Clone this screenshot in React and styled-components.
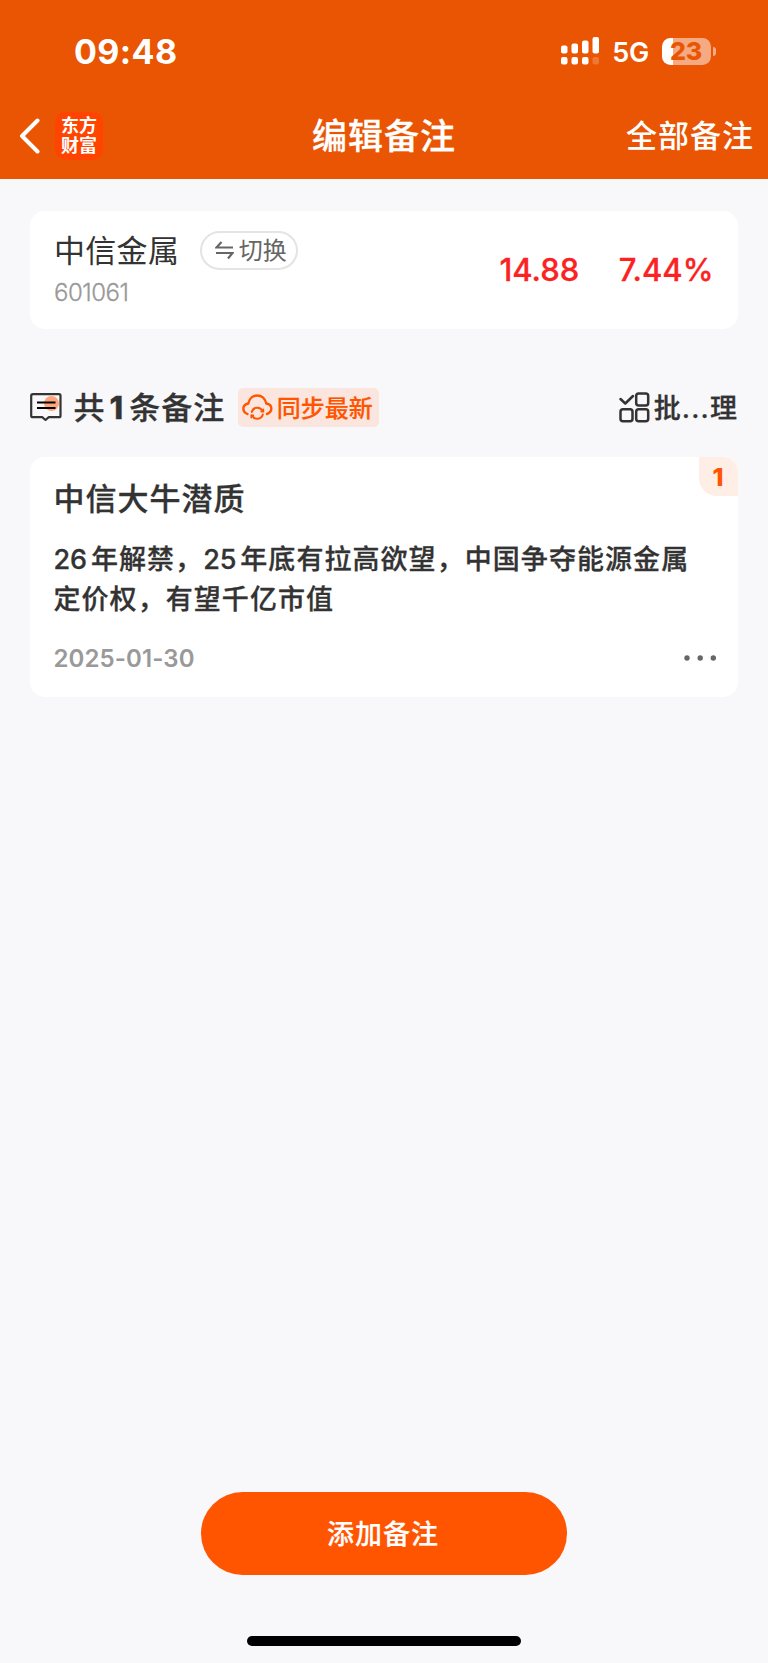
import React from 'react'
import styled, { createGlobalStyle } from 'styled-components';

const GlobalStyle = createGlobalStyle`
    body {
        margin: 0;
        background: #f8f8fb;
        font-family: Inter, 'Noto Sans CJK SC', sans-serif;
        color: #333;
    }
    * {
        box-sizing: border-box;
    }
    h1, h2, h3, p {
        margin: 0;
        font-weight: 500;
    }
    button {
        border: none;
        padding: 0;
        background: none;
        color: inherit;
        font-family: inherit;
    }
    svg {
        display: block;
        flex: none;
    }
`

const StyledPage = styled.div`
    width: 768px;
    height: 1663px;
    display: flex;
    flex-direction: column;
    white-space: nowrap;
`

const StyledHeader = styled.header`
    height: 179px;
    flex: none;
    background: #ea5504;
    color: #fff;
`

const StatusBar = styled.div`
    height: 102px;
    padding: 0 52px 0 74px;
    display: flex;
    align-items: center;

    .time {
        flex: 1;
        font-size: 34px;
        font-weight: 700;
        letter-spacing: 0.4px;
    }

    .network {
        margin: 2px 13px 0 12px;
        font-size: 27px;
        font-weight: 600;
        letter-spacing: -0.2px;
    }
`

const Battery = styled.div`
    display: flex;
    align-items: center;
    gap: 2px;

    .body {
        width: 49px;
        height: 27px;
        padding-left: 8px;
        border-radius: 8.5px;
        background: linear-gradient(90deg, #fff 11px, #f5aa82 11px);
        color: #ea5504;
        font-size: 25px;
        font-weight: 800;
        letter-spacing: -0.3px;
        line-height: 27px;
    }
    .nub {
        width: 3px;
        height: 9px;
        border-radius: 0 4px 4px 0;
        background: #f5aa82;
    }
`

const NavBar = styled.nav`
    height: 68px;
    padding: 0 15px 0 19px;
    display: grid;
    grid-template-columns: 1fr auto 1fr;
    align-items: center;

    .nav-left {
        display: flex;
        align-items: center;
        gap: 15px;
    }
    h1 {
        margin-right: 4px;
        font-size: 35px;
        letter-spacing: 1px;
        line-height: 48px;
        -webkit-text-stroke: 0.3px;
    }
    .nav-right {
        justify-self: end;
        font-size: 31px;
        font-weight: 500;
        letter-spacing: 1px;
        line-height: 44px;
        margin-right: -1px;
    }
`

const Logo = styled.div`
    width: 48px;
    height: 48px;
    padding: 4px 0 0 6px;
    border-radius: 10px;
    background: #ff4400;
    font-size: 18px;
    font-weight: 700;
    line-height: 20px;
`

const StyledMain = styled.main`
    flex: 1;
    padding: 32px 30px 0 29.5px;
`

const Card = styled.section`
    border-radius: 15px;
    background: #fff;
`

const StockCard = styled(Card)`
    height: 118px;
    padding: 20px 24.5px 0 24.5px;
    display: flex;
    justify-content: space-between;

    .stock-name {
        display: flex;
        align-items: center;
        gap: 20.5px;
        height: 39px;
    }
    h2 {
        margin-top: -4px;
        font-size: 31px;
        font-weight: 400;
        letter-spacing: 0.3px;
    }
    .code {
        margin-top: 7px;
        color: #999;
        font-size: 24px;
        font-weight: 300;
        letter-spacing: -0.5px;
        line-height: 31px;
        -webkit-text-stroke: 0.3px;
    }
    .quote {
        display: flex;
        gap: 39.5px;
        margin-top: 19px;
        color: #fa2222;
        font-size: 31px;
        font-weight: 500;
        line-height: 40px;
        -webkit-text-stroke: 0.3px;
    }
`

const SwitchButton = styled.button`
    width: 98px;
    height: 39px;
    padding-left: 4px;
    border: 2px solid #e4e4e4;
    border-radius: 20px;
    display: flex;
    align-items: center;
    justify-content: center;
    gap: 5px;
    color: #666;
    font-size: 24px;
    font-weight: 400;
    line-height: 36px;
`

const SectionBar = styled.div`
    height: 40px;
    margin: 58px 0 30px;
    display: flex;
    align-items: center;

    h2 {
        margin-left: 12px;
        font-size: 31px;
        letter-spacing: 1px;
        line-height: 42px;
        padding-top: 2px;
        -webkit-text-stroke: 0.3px;
    }
    h2 b {
        margin: 0 5px 0 4px;
        font-weight: 800;
    }
`

const SyncButton = styled.button`
    width: 141px;
    height: 39px;
    margin: 1px 0 0 12.5px;
    padding-left: 4px;
    border-radius: 5px;
    display: flex;
    align-items: center;
    gap: 4px;
    background: #fae6df;
    color: #ff5500;
    font-size: 24px;
    font-weight: 500;
    line-height: 36px;

    span {
        margin-top: 2px;
        -webkit-text-stroke: 0.2px;
    }
`

const BatchButton = styled.button`
    margin-left: auto;
    display: flex;
    align-items: center;
    gap: 4px;
    font-size: 27px;
    font-weight: 500;
    line-height: 40px;

    span {
        margin-top: 3px;
        margin-right: 1px;
        -webkit-text-stroke: 0.3px;
    }
    i {
        margin-left: 1px;
        font-style: normal;
        letter-spacing: 1.2px;
    }
`

const NoteCard = styled(Card)`
    position: relative;
    height: 240px;
    padding: 22px 21.5px 0 24px;

    h3 {
        font-size: 31px;
        letter-spacing: 1px;
        line-height: 40px;
        -webkit-text-stroke: 0.3px;
    }
    .content {
        margin-top: 21px;
        font-size: 27px;
        font-weight: 500;
        letter-spacing: 1.06px;
        word-spacing: -4.3px;
        line-height: 39.5px;
        -webkit-text-stroke: 0.3px;
    }
    .content span {
        letter-spacing: -0.1px;
    }
    .note-footer {
        height: 36px;
        margin-top: 21px;
        display: flex;
        align-items: center;
        justify-content: space-between;
        color: #999;
        font-size: 24px;
        font-weight: 600;
        letter-spacing: 0.1px;
    }
`

const NoteIndex = styled.span`
    position: absolute;
    top: 0;
    right: 0;
    width: 39px;
    height: 39px;
    padding-right: 1px;
    border-radius: 0 15px 0 18px;
    background: #ffeee6;
    color: #ff5500;
    font-size: 25px;
    font-weight: 800;
    line-height: 41px;
    text-align: center;
`

const StyledFooter = styled.footer`
    height: 171px;
    display: flex;
    flex-direction: column;
    align-items: center;

    .home-bar {
        width: 274px;
        height: 10px;
        margin-top: 61px;
        border-radius: 5px;
        background: #000;
    }
`

const AddButton = styled.button`
    width: 366px;
    height: 83px;
    padding: 0 2px 2px 0;
    border-radius: 42px;
    background: #ff5500;
    color: #fff;
    font-size: 27px;
    font-weight: 500;
    letter-spacing: 1px;
    -webkit-text-stroke: 0.2px;
`

const signalBars = [
    { x: 0, top: 8.5 },
    { x: 10.5, top: 6.5 },
    { x: 21, top: 3.5 },
    { x: 31.5, top: 0 },
]

const SignalIcon = () => (
    <svg width='39' height='28' fill='#fff'>
        {signalBars.map(({ x, top }, i) => (
            <g key={x}>
                <rect x={x} y={top} width='6.5' height={16.5 - top} rx='2' />
                <rect x={x} y='20' width='6.5' height='7.5' rx='2' opacity={i === 3 ? 0.2 : 1} />
            </g>
        ))}
    </svg>
)

const BackIcon = () => (
    <svg width='21' height='36' fill='none' stroke='#fff' strokeWidth='4' strokeLinecap='round' strokeLinejoin='round'>
        <path d='M18.5 2.5 3 18l15.5 15.5' />
    </svg>
)

const SwitchIcon = () => (
    <svg width='19' height='19' fill='none' stroke='#666' strokeWidth='2.2'>
        <path d='M6.5 1 1.5 6.5H18M1 12h16.5L13 17.5' />
    </svg>
)

const NoteIcon = () => (
    <svg width='32' height='28' fill='none' stroke='#333' strokeWidth='2.2' strokeLinejoin='round'>
        <circle cx='21.5' cy='10.5' r='7.5' fill='#ffa57b' stroke='none' />
        <path d='M3 1.200h26q1.500 0 1.500 1.500v20q0 1.500-1.500 1.500H18.800l-3.300 2.800-3.300-2.800H3q-1.800 0-1.800-1.500v-20q0-1.500 1.800-1.500Z' />
        <path stroke='#000' d='M7 9.500h18.500M7 15h18.500' />
    </svg>
)

const CloudSyncIcon = () => (
    <svg width='31' height='27' fill='none' stroke='#ff5500' strokeWidth='2.4' strokeLinecap='round'>
        <path d='M5.500 20C-.5 17.500.3 10.500 6.300 9.500 8.500-1.200 22-1.200 24.300 9.500c6.700 1 6.500 8.500.7 10.500' />
        <path strokeWidth='2' d='M9.800 18c1.500-5.500 8.500-5.500 10.800-1M20.800 20.500c-1.500 5.500-8.500 5.500-10.800 1' />
        <path strokeWidth='1.8' d='M21.300 15.500v2h-2M9.300 23.500v-2h2' />
    </svg>
)

const BatchIcon = () => (
    <svg width='31' height='31' fill='none' stroke='#333' strokeWidth='2.5' strokeLinecap='round' strokeLinejoin='round'>
        <path d='m1.500 7 4.800 4.500L14 4' />
        <rect x='17.2' y='1.5' width='12' height='12' rx='2.5' />
        <rect x='1.5' y='17.2' width='12' height='12' rx='2.5' />
        <rect x='17.2' y='17.2' width='12' height='12' rx='2.5' />
    </svg>
)

const MoreIcon = () => (
    <svg width='33' height='6' fill='#666'>
        <circle cx='3' cy='3' r='2.7' />
        <circle cx='16.2' cy='3' r='2.7' />
        <circle cx='29.3' cy='3' r='2.7' />
    </svg>
)

export default function App() {
    return (
        <StyledPage>
            <GlobalStyle />
            <StyledHeader>
                <StatusBar>
                    <span className='time'>09:48</span>
                    <SignalIcon />
                    <span className='network'>5G</span>
                    <Battery>
                        <div className='body'>23</div>
                        <div className='nub' />
                    </Battery>
                </StatusBar>
                <NavBar>
                    <div className='nav-left'>
                        <BackIcon />
                        <Logo>东方<br />财富</Logo>
                    </div>
                    <h1>编辑备注</h1>
                    <span className='nav-right'>全部备注</span>
                </NavBar>
            </StyledHeader>
            <StyledMain>
                <StockCard>
                    <div>
                        <div className='stock-name'>
                            <h2>中信金属</h2>
                            <SwitchButton><SwitchIcon />切换</SwitchButton>
                        </div>
                        <p className='code'>601061</p>
                    </div>
                    <div className='quote'>
                        <span>14.88</span>
                        <span>7.44%</span>
                    </div>
                </StockCard>
                <SectionBar>
                    <NoteIcon />
                    <h2>共<b>1</b>条备注</h2>
                    <SyncButton><CloudSyncIcon /><span>同步最新</span></SyncButton>
                    <BatchButton><BatchIcon /><span>批<i>...</i>理</span></BatchButton>
                </SectionBar>
                <NoteCard>
                    <NoteIndex>1</NoteIndex>
                    <h3>中信大牛潜质</h3>
                    <p className='content'>
                        <span>26</span> 年解禁，<span>25</span> 年底有拉高欲望，中国争夺能源金属<br />
                        定价权，有望千亿市值
                    </p>
                    <div className='note-footer'>
                        <span>2025-01-30</span>
                        <MoreIcon />
                    </div>
                </NoteCard>
            </StyledMain>
            <StyledFooter>
                <AddButton>添加备注</AddButton>
                <div className='home-bar' />
            </StyledFooter>
        </StyledPage>
    )
}
